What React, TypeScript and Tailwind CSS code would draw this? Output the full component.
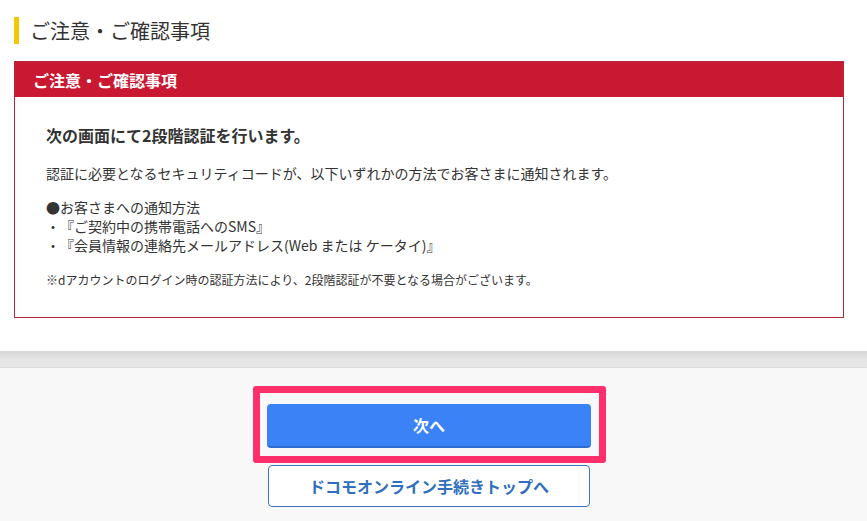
const font = { fontFamily: '"Noto Sans CJK JP", "Noto Sans", sans-serif' };

const NoticeBox = () => (
  <div className="border border-[#b3273c] bg-white">
    <div className="h-[35px] bg-[#c91832] px-[18px] flex items-center text-[16px] font-bold text-white leading-none">
      ご注意・ご確認事項
    </div>
    <div className="px-[31px] pt-[26px] pb-[28px] text-[#333333] [text-spacing-trim:space-all]">
      <p className="text-[16px] font-bold leading-[24px]">次の画面にて2段階認証を行います。</p>
      <p className="mt-[16px] text-[14px] leading-[20px]">
        認証に必要となるセキュリティコードが、以下いずれかの方法でお客さまに通知されます。
      </p>
      <div className="mt-[15px] text-[14px] leading-[19px]">
        <p>●お客さまへの通知方法</p>
        <p>・『ご契約中の携帯電話へのSMS』</p>
        <p>・『会員情報の連絡先メールアドレス(Web または ケータイ)』</p>
      </div>
      <p className="mt-[16px] text-[12px] leading-[18px]">
        ※dアカウントのログイン時の認証方法により、2段階認証が不要となる場合がございます。
      </p>
    </div>
  </div>
);

export default function App() {
  return (
    <div className="w-[867px] h-[521px] overflow-hidden bg-white" style={font}>
      {/* Content */}
      <div className="px-[14px] pt-[17px] pb-[33px] pr-[23px]">
        <div className="flex items-center h-[27px]">
          <div className="w-[5px] h-[27px] bg-[#f3c800]" />
          <h2 className="ml-[11px] text-[20px] leading-none text-[#333333]">ご注意・ご確認事項</h2>
        </div>
        <div className="mt-[17px]">
          <NoticeBox />
        </div>
      </div>

      {/* Divider band */}
      <div className="h-[17px] bg-gradient-to-b from-[#d6d6d6] via-[#e4e4e4] to-[#e7e7e7] border-b border-[#dcdcdc]" />

      {/* Actions */}
      <div className="bg-[#f8f8f8] h-full pt-[36px] pr-[9px] flex flex-col items-center">
        <div className="relative">
          <button className="w-[324px] h-[44px] rounded-[4px] bg-[#3a82f6] border-b-2 border-[#2f6cd0] text-white text-[16px] font-bold">
            次へ
          </button>
          <div className="absolute -left-[14px] -right-[15px] -top-[18px] -bottom-[15px] border-[7px] border-[#fe2f6b] rounded-[3px] pointer-events-none" />
        </div>
        <button className="mt-[17px] w-[322px] h-[42px] rounded-[4px] bg-white border border-[#3d73bd] text-[#2f6fbd] text-[16px] font-bold">
          ドコモオンライン手続きトップへ
        </button>
      </div>
    </div>
  );
}
